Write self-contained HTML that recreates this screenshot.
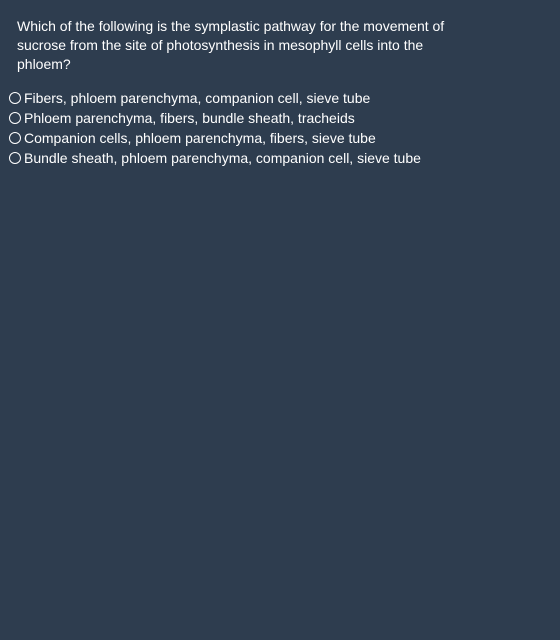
<!DOCTYPE html>
<html><head><style>
body{margin:0;width:560px;height:640px;background:#2e3d4f;font-family:"Liberation Sans",sans-serif;color:#fff;font-size:14px;}
.q{position:absolute;left:17px;top:17px;width:440px;line-height:19px;}
.o{position:absolute;left:9px;height:20px;line-height:20px;white-space:nowrap;}
.o span{display:inline-block;width:10px;height:10px;border:1px solid #fff;border-radius:50%;margin-right:3px;vertical-align:-1px;}
</style></head><body>
<div class="q">Which of the following is the symplastic pathway for the movement of sucrose from the site of photosynthesis in mesophyll cells into the phloem?</div>
<div class="o" style="top:88px"><span></span>Fibers, phloem parenchyma, companion cell, sieve tube</div>
<div class="o" style="top:108px"><span></span>Phloem parenchyma, fibers, bundle sheath, tracheids</div>
<div class="o" style="top:128px"><span></span>Companion cells, phloem parenchyma, fibers, sieve tube</div>
<div class="o" style="top:148px"><span></span>Bundle sheath, phloem parenchyma, companion cell, sieve tube</div>
</body></html>
